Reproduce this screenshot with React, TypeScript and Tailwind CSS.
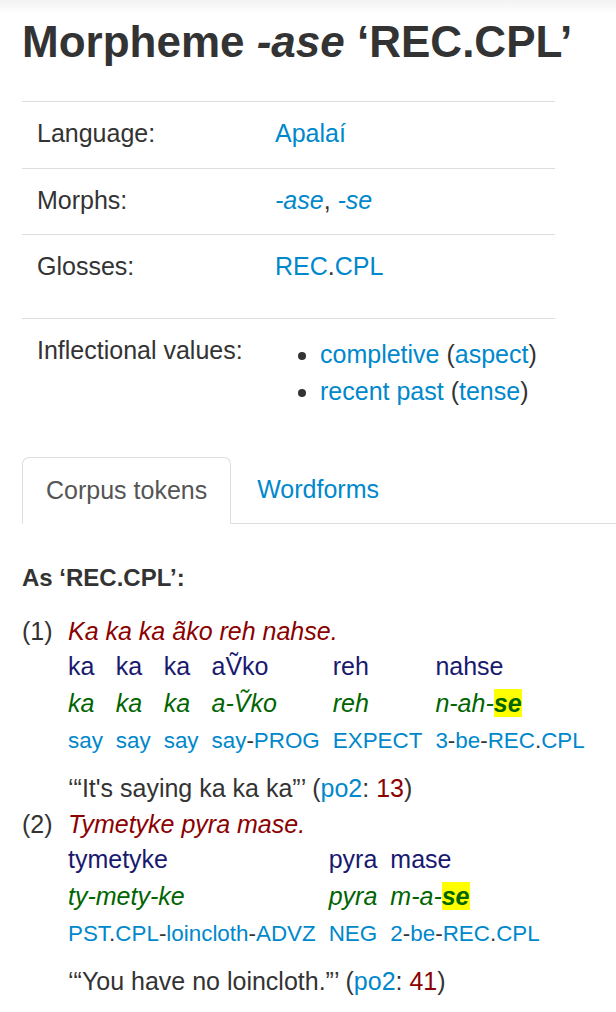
import React from 'react';

type Word = { w: string; m: React.ReactNode; g: string };

const LINK = 'text-[#0088cc]';

// gloss line: morphemes are links, separators stay dark
const Gloss = ({ s }: { s: string }) => (
  <>
    {s.split(/([-.])/).map((p, i) =>
      p === '-' || p === '.' ? (
        <span key={i} className="text-[#333]">{p}</span>
      ) : (
        <span key={i} className={LINK}>{p}</span>
      )
    )}
  </>
);

const Hl = ({ pre, hit }: { pre: string; hit: string }) => (
  <>
    {pre}
    <b className="bg-[#ffff00]">{hit}</b>
  </>
);

const Example = ({
  n,
  sentence,
  words,
  trans,
  page,
}: {
  n: number;
  sentence: string;
  words: Word[];
  trans: string;
  page: string;
}) => (
  <div className="flex">
    <div className="w-[46px] shrink-0 leading-[34px]">({n})</div>
    <div>
      <div className="italic leading-[34px] text-[#8b0000]">{sentence}</div>
      <div className="flex leading-[37px]">
        {words.map((w, i) => (
          <div key={i} className="mr-[13px] flex flex-col whitespace-nowrap">
            <span className="text-[#191970]">{w.w}</span>
            <span className="italic text-[#006400]">{w.m}</span>
            <span className="text-[22.4px]">
              <Gloss s={w.g} />
            </span>
          </div>
        ))}
      </div>
      <div className="mt-[10.5px]">
        {trans} (<span className={LINK}>po2</span>: <span className="text-[#8b0000]">{page}</span>)
      </div>
    </div>
  </div>
);

const Row = ({ label, children }: { label: string; children: React.ReactNode }) => (
  <div className="flex border-t border-[#ddd]">
    <div className="w-[238px] shrink-0 px-[15px] pt-[13px] pb-[15px]">{label}</div>
    <div className="px-[15px] pt-[13px] pb-[15px]">{children}</div>
  </div>
);

export default function App() {
  return (
    <div className="min-h-screen bg-white text-[#333] font-['Liberation_Sans',Arial,sans-serif] text-[25px] leading-[37.5px]">
      <div className="h-[14px] bg-linear-to-b from-[#f2f2f2] to-white" />
      <div className="pl-[22px]">
        <h1 className="text-[44px] font-bold leading-[48px] mt-[4px] mb-[35px]">
          Morpheme <i>-ase</i> ‘REC.CPL’
        </h1>

        {/* properties table */}
        <div className="w-[533px]">
          <Row label="Language:">
            <span className={LINK}>Apalaí</span>
          </Row>
          <Row label="Morphs:">
            <i className={LINK}>-ase</i>, <i className={LINK}>-se</i>
          </Row>
          <div className="pb-[17px]">
            <Row label="Glosses:">
              <Gloss s="REC.CPL" />
            </Row>
          </div>
          <div className="flex border-t border-[#ddd]">
            <div className="w-[238px] shrink-0 px-[15px] pt-[13px]">Inflectional values:</div>
            <ul className="list-disc pl-[45px] pt-[17px] ml-[15px]">
              <li>
                <span className={LINK}>completive</span> (<span className={LINK}>aspect</span>)
              </li>
              <li>
                <span className={LINK}>recent past</span> (<span className={LINK}>tense</span>)
              </li>
            </ul>
          </div>
        </div>

        {/* tabs */}
        <div className="mt-[46px] flex border-b border-[#ddd]">
          <div className="-mb-px rounded-t-[7px] border border-[#ddd] border-b-white bg-white px-[23px] py-[14px] text-[#555]">
            Corpus tokens
          </div>
          <div className="ml-[2px] px-[24px] py-[14px] text-[#0088cc]">Wordforms</div>
        </div>

        <h4 className="mt-[41px] mb-[23px] text-[24px] font-bold leading-[26px]">As ‘REC.CPL’:</h4>

        <div className="flex flex-col">
          <Example
            n={1}
            sentence="Ka ka ka ãko reh nahse."
            words={[
              { w: 'ka', m: 'ka', g: 'say' },
              { w: 'ka', m: 'ka', g: 'say' },
              { w: 'ka', m: 'ka', g: 'say' },
              { w: 'aṼko', m: 'a-Ṽko', g: 'say-PROG' },
              { w: 'reh', m: 'reh', g: 'EXPECT' },
              { w: 'nahse', m: <Hl pre="n-ah-" hit="se" />, g: '3-be-REC.CPL' },
            ]}
            trans="‘“It's saying ka ka ka”’"
            page="13"
          />
          <Example
            n={2}
            sentence="Tymetyke pyra mase."
            words={[
              { w: 'tymetyke', m: 'ty-mety-ke', g: 'PST.CPL-loincloth-ADVZ' },
              { w: 'pyra', m: 'pyra', g: 'NEG' },
              { w: 'mase', m: <Hl pre="m-a-" hit="se" />, g: '2-be-REC.CPL' },
            ]}
            trans="‘“You have no loincloth.”’"
            page="41"
          />
        </div>
      </div>
    </div>
  );
}
